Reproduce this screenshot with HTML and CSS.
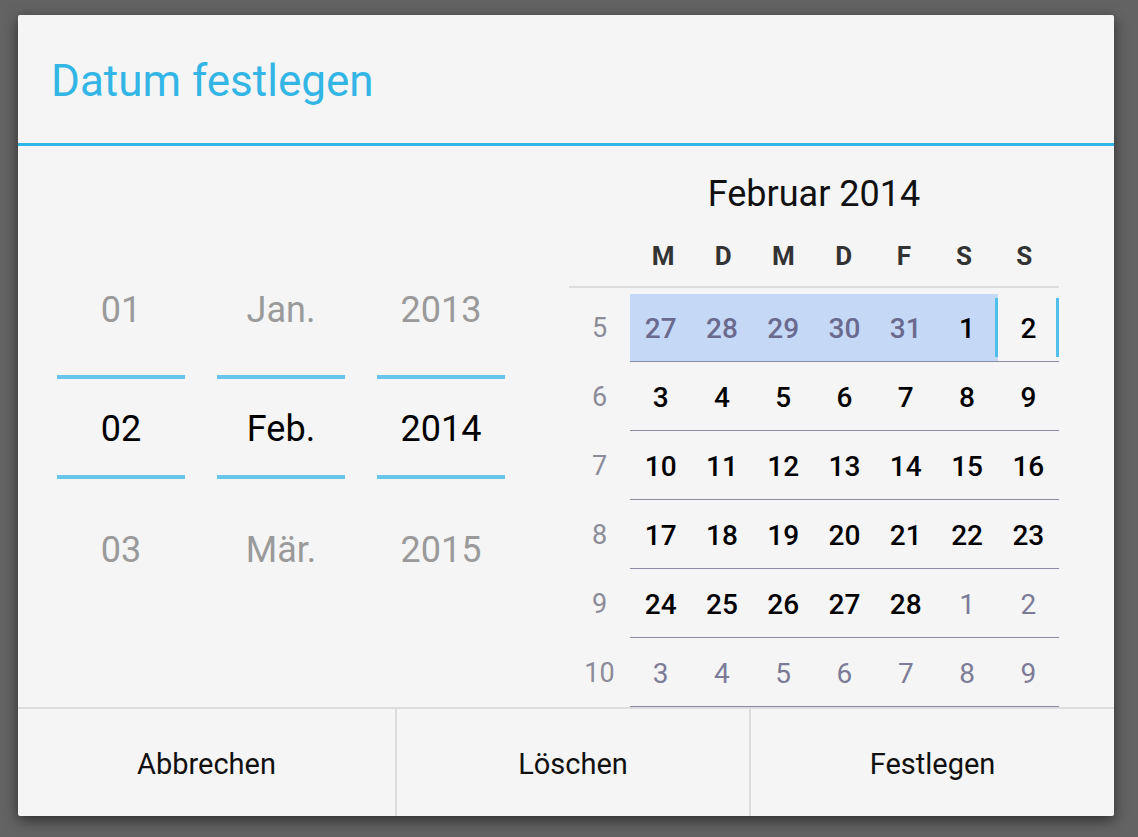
FILE: index.html
```html
<!DOCTYPE html>
<html lang="de">
<head>
<meta charset="utf-8">
<title>Datum festlegen</title>
<link rel="stylesheet" href="styles.css">
</head>
<body>
<div class="dialog">
  <div class="header"><h1 class="title">Datum festlegen</h1></div>
  <div class="content">
    <div class="pickers">
      <div class="picker">
        <div class="item item-top faded">01</div>
        <div class="line"></div>
        <div class="item selected">02</div>
        <div class="line"></div>
        <div class="item item-bottom faded">03</div>
      </div>
      <div class="picker">
        <div class="item item-top faded">Jan.</div>
        <div class="line"></div>
        <div class="item selected">Feb.</div>
        <div class="line"></div>
        <div class="item item-bottom faded">Mär.</div>
      </div>
      <div class="picker">
        <div class="item item-top faded">2013</div>
        <div class="line"></div>
        <div class="item selected">2014</div>
        <div class="line"></div>
        <div class="item item-bottom faded">2015</div>
      </div>
    </div>
    <div class="calendar">
      <div class="month">Februar 2014</div>
      <div class="weekdays">
        <span></span><span>M</span><span>D</span><span>M</span><span>D</span><span>F</span><span>S</span><span>S</span>
      </div>
      <div class="week">
        <span class="wk">5</span>
        <span class="day hl other-hl">27</span><span class="day hl other-hl">28</span><span class="day hl other-hl">29</span><span class="day hl other-hl">30</span><span class="day hl other-hl">31</span><span class="day hl bar">1</span><span class="day bar">2</span>
      </div>
      <div class="week">
        <span class="wk">6</span>
        <span class="day">3</span><span class="day">4</span><span class="day">5</span><span class="day">6</span><span class="day">7</span><span class="day">8</span><span class="day">9</span>
      </div>
      <div class="week">
        <span class="wk">7</span>
        <span class="day">10</span><span class="day">11</span><span class="day">12</span><span class="day">13</span><span class="day">14</span><span class="day">15</span><span class="day">16</span>
      </div>
      <div class="week">
        <span class="wk">8</span>
        <span class="day">17</span><span class="day">18</span><span class="day">19</span><span class="day">20</span><span class="day">21</span><span class="day">22</span><span class="day">23</span>
      </div>
      <div class="week">
        <span class="wk">9</span>
        <span class="day">24</span><span class="day">25</span><span class="day">26</span><span class="day">27</span><span class="day">28</span><span class="day other">1</span><span class="day other">2</span>
      </div>
      <div class="week">
        <span class="wk">10</span>
        <span class="day other">3</span><span class="day other">4</span><span class="day other">5</span><span class="day other">6</span><span class="day other">7</span><span class="day other">8</span><span class="day other">9</span>
      </div>
    </div>
  </div>
  <div class="buttons">
    <div class="btn btn-1">Abbrechen</div>
    <div class="btn btn-2">Löschen</div>
    <div class="btn btn-3">Festlegen</div>
  </div>
</div>
</body>
</html>
```
FILE: styles.css
```css
html, body {
  margin: 0;
  padding: 0;
}
body {
  background: #636363;
  width: 1138px;
  height: 837px;
  overflow: hidden;
  font-family: Roboto, "Noto Sans", "Liberation Sans", sans-serif;
}
.dialog {
  margin: 15px 0 0 18px;
  width: 1096px;
  height: 801px;
  background: #f5f5f5;
  border-radius: 2px;
  box-shadow: 0 4px 14px rgba(0, 0, 0, 0.55);
  display: flex;
  flex-direction: column;
  overflow: hidden;
}
.header {
  height: 128px;
  border-bottom: 3px solid #33b5e5;
  display: flex;
  align-items: center;
  padding-left: 33px;
}
.title {
  margin: 0;
  padding-top: 3px;
  font-size: 44px;
  font-weight: 400;
  color: #33b5e5;
  line-height: 1;
}
.content {
  height: 561px;
  display: flex;
  padding-left: 39px;
  gap: 64px;
  overflow: hidden;
}
.pickers {
  display: flex;
  gap: 32px;
  width: 448px;
}
.picker {
  width: 128px;
  display: flex;
  flex-direction: column;
}
.item {
  height: 92px;
  padding-top: 4px;
  line-height: 92px;
  text-align: center;
  font-size: 36px;
  color: #000;
}
.item-top {
  margin-top: 114px;
  margin-bottom: 19px;
}
.item-bottom {
  margin-top: 21px;
}
.faded {
  color: #9a9a9a;
}
.line {
  height: 4px;
  background: #68c5ea;
}
.calendar {
  width: 490px;
  padding-top: 22px;
}
.month {
  height: 48px;
  padding-top: 2px;
  line-height: 48px;
  text-align: center;
  font-size: 36px;
  color: #111;
}
.weekdays {
  margin-top: 8px;
  display: grid;
  grid-template-columns: 64px repeat(7, 60.2px);
  height: 59px;
  padding-top: 1px;
  line-height: 59px;
  border-bottom: 2px solid #dcdcdc;
  font-size: 26px;
  font-weight: 700;
  color: #333;
  text-align: center;
}
.week {
  display: grid;
  grid-template-columns: 61px repeat(7, 1fr);
  height: 69px;
  text-align: center;
}
.weekdays + .week {
  margin-top: 5px;
}
.wk {
  padding-top: 3px;
  line-height: 65px;
  font-size: 27px;
  color: #8c8c98;
}
.day {
  position: relative;
  padding-top: 3px;
  line-height: 65px;
  border-bottom: 1px solid #8a8aa2;
  font-size: 28px;
  font-weight: 500;
  color: #000;
}
.hl {
  background: linear-gradient(#f5f5f5 0 1px, #c5d9f7 1px);
}
.other-hl {
  color: #6a6a8e;
}
.other {
  color: #7c7c98;
  font-weight: 400;
}
.bar::after {
  content: "";
  position: absolute;
  right: 0;
  top: 5px;
  bottom: 4px;
  width: 3px;
  background: #4fc0ec;
}
.buttons {
  height: 107px;
  border-top: 2px solid #dcdcdc;
  display: grid;
  grid-template-columns: 377px 354px 365px;
}
.btn {
  display: flex;
  align-items: center;
  justify-content: center;
  font-size: 29px;
  color: #111;
  padding-top: 3px;
}
.btn-2, .btn-3 {
  border-left: 2px solid #dcdcdc;
}
```
